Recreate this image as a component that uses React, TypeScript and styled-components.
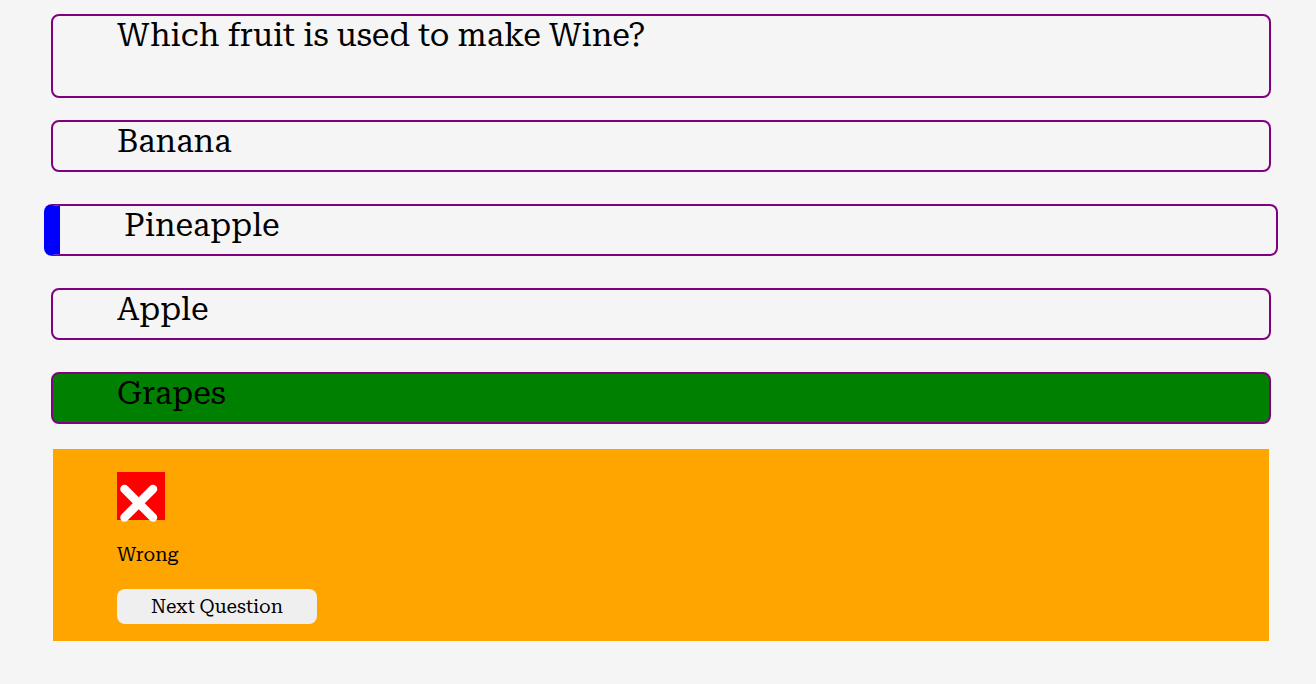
import React, { useState } from "react";
import styled, { createGlobalStyle } from "styled-components";

const GlobalStyle = createGlobalStyle`
  *, *::before, *::after { box-sizing: border-box; }
  body {
    margin: 0;
    background: whitesmoke;
    color: #000;
    font-family: "Roboto Serif", "Noto Serif", "DejaVu Serif", "Liberation Serif", serif;
    font-weight: 400;
  }
`;

const Page = styled.main`
  padding: 14px 45px 43px 51px;
`;

const Question = styled.h1`
  margin: 0 0 22px;
  min-height: 84px;
  padding: 0 64px;
  border: 2px solid purple;
  border-radius: 8px;
  font-size: 32px;
  font-weight: inherit;
  line-height: 38px;
`;

const Options = styled.div`
  display: flex;
  flex-direction: column;
  gap: 32px;
  margin-bottom: 25px;
`;

const Option = styled.button<{ $chosen?: boolean; $correct?: boolean }>`
  min-height: 52px;
  margin: ${(p) => (p.$chosen ? "0 -7px" : "0")};
  padding: 0 64px 10px;
  border: 2px solid purple;
  border-left: ${(p) => (p.$chosen ? "16px solid blue" : "2px solid purple")};
  border-radius: 8px;
  background: ${(p) => (p.$correct ? "green" : "transparent")};
  color: inherit;
  font: inherit;
  font-size: 32px;
  line-height: 38px;
  text-align: left;
`;

const Result = styled.section`
  margin: 0 2px;
  padding: 23px 64px 17px;
  background: orange;
`;

const Mark = styled.svg`
  display: block;
  width: 48px;
  height: 50px;
`;

const Verdict = styled.p`
  margin: 18px 0 20px;
  font-size: 19px;
  line-height: 29px;
`;

const NextButton = styled.button`
  display: block;
  width: 200px;
  height: 35px;
  padding: 0;
  border: 0;
  border-radius: 8px;
  background: #efefef;
  color: #000;
  font: inherit;
  font-size: 19px;
`;

const answers = ["Banana", "Pineapple", "Apple", "Grapes"];
const correctAnswer = "Grapes";

export default function App() {
  const [chosen, setChosen] = useState("Pineapple");
  return (
    <>
      <GlobalStyle />
      <Page>
        <Question>Which fruit is used to make Wine?</Question>
        <Options>
          {answers.map((answer) => (
            <Option
              key={answer}
              type="button"
              $chosen={answer === chosen}
              $correct={answer === correctAnswer}
              onClick={() => setChosen(answer)}
            >
              {answer}
            </Option>
          ))}
        </Options>
        <Result>
          <Mark viewBox="0 0 48 50" aria-hidden="true">
            <rect width="48" height="48" fill="red" />
            <path d="M7.5 17L36 45.5M36 17L7.5 45.5" stroke="#fff" strokeWidth="8.5" strokeLinecap="round" />
          </Mark>
          <Verdict>{chosen === correctAnswer ? "Correct" : "Wrong"}</Verdict>
          <NextButton type="button">Next Question</NextButton>
        </Result>
      </Page>
    </>
  );
}
